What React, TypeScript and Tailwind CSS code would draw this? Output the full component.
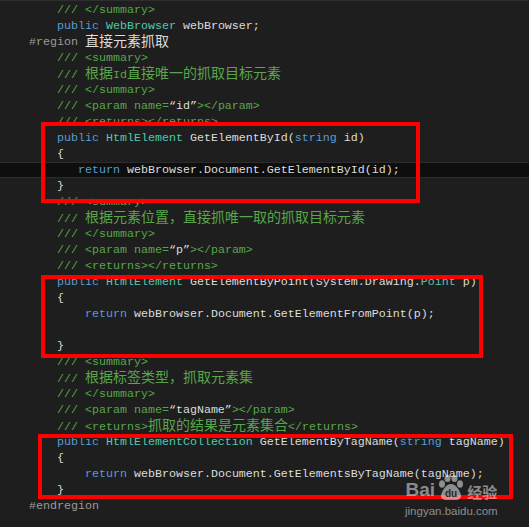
import React from 'react';

type Seg = [string, string];

const C = {
  txt: 'text-[#dcdcdc]',
  kw: 'text-[#569cd6]',
  ty: 'text-[#4ec9b0]',
  cm: 'text-[#57a64a]',
  pp: 'text-[#9b9b9b]',
};

const doc = (s: string): Seg[] => [['/// ' + s, C.cm]];
const param = (name: string): Seg[] => [
  ['/// <param name=', C.cm],
  ['\u201c' + name + '\u201d', C.txt],
  ['></param>', C.cm],
];

const lines: { indent: number; segs: Seg[]; current?: boolean }[] = [
  { indent: 4, segs: doc('</summary>') },
  { indent: 4, segs: [['public ', C.kw], ['WebBrowser', C.ty], [' webBrowser;', C.txt]] },
  { indent: 0, segs: [['#region ', C.pp], ['直接元素抓取', C.txt]] },
  { indent: 4, segs: doc('<summary>') },
  { indent: 4, segs: doc('根据Id直接唯一的抓取目标元素') },
  { indent: 4, segs: doc('</summary>') },
  { indent: 4, segs: param('id') },
  { indent: 4, segs: doc('<returns></returns>') },
  { indent: 4, segs: [['public ', C.kw], ['HtmlElement', C.ty], [' GetElementById(', C.txt], ['string', C.kw], [' id)', C.txt]] },
  { indent: 4, segs: [['{', C.txt]] },
  { indent: 7, current: true, segs: [['return', C.kw], [' webBrowser.Document.GetElementById(id);', C.txt]] },
  { indent: 4, segs: [['}', C.txt]] },
  { indent: 4, segs: doc('<summary>') },
  { indent: 4, segs: doc('根据元素位置，直接抓唯一取的抓取目标元素') },
  { indent: 4, segs: doc('</summary>') },
  { indent: 4, segs: param('p') },
  { indent: 4, segs: doc('<returns></returns>') },
  { indent: 4, segs: [['public ', C.kw], ['HtmlElement', C.ty], [' GetElementByPoint(System.Drawing.', C.txt], ['Point', C.ty], [' p)', C.txt]] },
  { indent: 4, segs: [['{', C.txt]] },
  { indent: 8, segs: [['return', C.kw], [' webBrowser.Document.GetElementFromPoint(p);', C.txt]] },
  { indent: 0, segs: [] },
  { indent: 4, segs: [['}', C.txt]] },
  { indent: 4, segs: doc('<summary>') },
  { indent: 4, segs: doc('根据标签类型，抓取元素集') },
  { indent: 4, segs: doc('</summary>') },
  { indent: 4, segs: param('tagName') },
  { indent: 4, segs: [['/// <returns>抓取的结果是元素集合</returns>', C.cm]] },
  { indent: 4, segs: [['public ', C.kw], ['HtmlElementCollection', C.ty], [' GetElementByTagName(', C.txt], ['string', C.kw], [' tagName)', C.txt]] },
  { indent: 4, segs: [['{', C.txt]] },
  { indent: 8, segs: [['return', C.kw], [' webBrowser.Document.GetElementsByTagName(tagName);', C.txt]] },
  { indent: 4, segs: [['}', C.txt]] },
  { indent: 0, segs: [['#endregion', C.pp]] },
];

// CJK runs get the wider font so one glyph spans two columns
const Run = ({ text, color }: { text: string; color: string }) => {
  const parts = text.split(/([\u3000-\u9fff\uff00-\uffef]+)/).filter(Boolean);
  return (
    <span className={color}>
      {parts.map((p, i) =>
        /[\u3000-\u9fff\uff00-\uffef]/.test(p) ? (
          <span key={i} className="text-[14px] leading-none font-['Noto_Sans_CJK_SC',sans-serif]">
            {p}
          </span>
        ) : (
          <span key={i}>{p}</span>
        )
      )}
    </span>
  );
};

const Paw = () => (
  <svg width="30" height="26" viewBox="0 0 30 26" className="mx-[1px]">
    <g fill="rgba(235,235,235,0.55)">
      <ellipse cx="6" cy="9" rx="3" ry="3.8" />
      <ellipse cx="11.5" cy="3.5" rx="3" ry="3.5" />
      <ellipse cx="18.5" cy="3.5" rx="3" ry="3.5" />
      <ellipse cx="24" cy="9" rx="3" ry="3.8" />
      <path d="M15 9 C10 9 5 17 5 21 C5 24 8 25 10 25 L20 25 C22 25 25 24 25 21 C25 17 20 9 15 9 Z" />
    </g>
    <text x="15" y="22" textAnchor="middle" fontSize="10" fontWeight="700" fill="#2a2a2a" fontFamily="Liberation Sans, sans-serif">
      du
    </text>
  </svg>
);

export default function App() {
  return (
    <div className="relative w-[529px] h-[527px] overflow-hidden bg-[#1e1e1e] border-t border-[#2e2e2e]">
      <div className="pt-[1px] font-['Liberation_Mono',monospace] text-[11.67px] leading-4 whitespace-pre">
        {lines.map((l, i) => (
          <div
            key={i}
            className={
              l.current
                ? 'h-4 flex items-center pl-[29px] bg-[#0e0e0e] border-y border-[#2c2c2c]'
                : 'h-4 flex items-center pl-[29px]'
            }
          >
            <span>{' '.repeat(l.indent)}</span>
            {l.segs.map(([t, c], j) => (
              <Run key={j} text={t} color={c} />
            ))}
          </div>
        ))}
      </div>

      <div className="absolute left-[41px] top-[121px] w-[379px] h-[81px] border-4 border-[#ff0000]" />
      <div className="absolute left-[41px] top-[274px] w-[442px] h-[83px] border-4 border-[#ff0000]" />
      <div className="absolute left-[38px] top-[433px] w-[475px] h-[65px] border-4 border-[#ff0000]" />

      <div className="absolute left-[405px] top-[474px] flex flex-col items-center text-[rgba(235,235,235,0.55)]">
        <div className="flex items-end">
          <span className="font-['Liberation_Sans',sans-serif] font-bold text-[19px] leading-none mb-[2px]">Bai</span>
          <Paw />
          <span className="font-['Noto_Sans_CJK_SC',sans-serif] font-bold text-[15px] leading-none mb-[2px]">经验</span>
        </div>
        <span className="font-['Liberation_Sans',sans-serif] text-[11.5px] leading-none mt-[5px]">jingyan.baidu.com</span>
      </div>
    </div>
  );
}
